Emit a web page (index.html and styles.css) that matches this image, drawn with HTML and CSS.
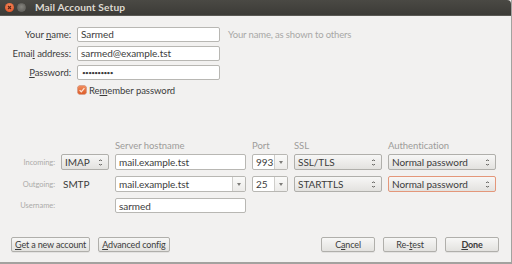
FILE: index.html
```html
<!DOCTYPE html>
<html>
<head>
<meta charset="utf-8">
<title>Mail Account Setup</title>
<link rel="stylesheet" href="styles.css">
</head>
<body>
<div class="window">
  <div class="titlebar">
    <span class="wbtn close"><svg width="9" height="9" viewBox="0 0 9 9"><path d="M3 3 L6 6 M6 3 L3 6" stroke="#5a2414" stroke-width="1.1"/></svg></span>
    <span class="wbtn min"></span>
    <span class="title">Mail Account Setup</span>
  </div>
  <div class="content">
    <div class="identity">
      <span class="lbl">Your <u>n</u>ame:</span>
      <div class="entry">Sarmed</div>
      <span class="hint">Your name, as shown to others</span>
      <span class="lbl">Emai<u>l</u> address:</span>
      <div class="entry">sarmed@example.tst</div>
      <span></span>
      <span class="lbl"><u>P</u>assword:</span>
      <div class="entry pw">••••••••••</div>
      <span></span>
    </div>
    <div class="remember">
      <span class="check"><svg width="8" height="8" viewBox="0 0 8 8"><path d="M1.6 4.1 L3.3 5.8 L6.4 2.2" fill="none" stroke="#fbe3d6" stroke-width="1.3"/></svg></span>
      <span>Re<u>m</u>ember password</span>
    </div>
    <div class="server">
      <span></span>
      <span></span>
      <span class="head">Server hostname</span>
      <span class="head">Port</span>
      <span class="head">SSL</span>
      <span class="head">Authentication</span>

      <span class="rlbl">Incoming:</span>
      <div class="btn sel">IMAP<span class="ud"></span></div>
      <div class="entry">mail.example.tst</div>
      <div class="combo"><span class="ctext">993</span><span class="carrow"></span></div>
      <div class="btn sel">SSL/TLS<span class="ud"></span></div>
      <div class="btn sel">Normal password<span class="ud"></span></div>

      <span class="rlbl">Outgoing:</span>
      <span class="plain">SMTP</span>
      <div class="combo"><span class="ctext">mail.example.tst</span><span class="carrow"></span></div>
      <div class="combo"><span class="ctext">25</span><span class="carrow"></span></div>
      <div class="btn sel">STARTTLS<span class="ud"></span></div>
      <div class="btn sel focus">Normal password<span class="ud"></span></div>

      <span class="rlbl">Username:</span>
      <span></span>
      <div class="entry">sarmed</div>
      <span></span>
      <span></span>
      <span></span>
    </div>
    <div class="actions">
      <div class="btn push"><u>G</u>et a new account</div>
      <div class="btn push"><u>A</u>dvanced config</div>
      <div class="spacer"></div>
      <div class="btn push fixed">C<u>a</u>ncel</div>
      <div class="btn push fixed">Re-<u>t</u>est</div>
      <div class="btn push fixed bold"><u>D</u>one</div>
    </div>
  </div>
</div>
</body>
</html>
```
FILE: styles.css
```css
html, body {
  margin: 0;
  padding: 0;
  background: #f2f1f0;
}
.window {
  width: 512px;
  height: 264px;
  box-sizing: border-box;
  display: flex;
  flex-direction: column;
  background: #f2f1f0;
  border-right: 1px solid #a3a29f;
  border-bottom: 2px solid #a3a29f;
  font-family: Lato, "Open Sans", sans-serif;
  font-size: 9.5px;
  letter-spacing: -0.05px;
  color: #3c3c3c;
  overflow: hidden;
}
u {
  text-decoration: underline;
  text-underline-offset: 1px;
}
.titlebar {
  height: 15px;
  flex: none;
  display: flex;
  align-items: center;
  background: linear-gradient(#4a4944, #3c3b37);
  border-bottom: 1px solid #5a5954;
  border-top-right-radius: 4px;
  padding-left: 5px;
}
.wbtn {
  width: 9px;
  height: 9px;
  border-radius: 50%;
  display: flex;
  margin-right: 3px;
  box-sizing: border-box;
}
.wbtn.close {
  background: radial-gradient(circle at 50% 35%, #f48a5d, #de4a1f);
}
.wbtn.min {
  background: radial-gradient(circle at 50% 40%, #86857f, #5e5d58);
  border: 1px solid #6d6c67;
}
.title {
  margin-left: 6px;
  font-weight: bold;
  font-size: 10.2px;
  letter-spacing: 0.1px;
  color: #dfdbd2;
  line-height: 15px;
}
.content {
  flex: 1;
  display: flex;
  flex-direction: column;
}
.identity {
  margin-top: 11px;
  display: grid;
  grid-template-columns: 71px 143px auto;
  grid-auto-rows: 15px;
  row-gap: 4px;
  column-gap: 6px;
  align-items: center;
}
.lbl {
  text-align: right;
  line-height: 15px;
}
.entry {
  box-sizing: border-box;
  height: 15px;
  background: #fff;
  border: 1px solid #b8b7b3;
  border-radius: 2px;
  padding-left: 3px;
  line-height: 13px;
  font-size: 10px;
  white-space: nowrap;
  overflow: hidden;
}
.entry.pw {
  font-size: 6.5px;
  letter-spacing: -0.7px;
  padding-left: 4px;
}
.hint {
  margin-left: 2px;
  color: #a8a8a6;
  letter-spacing: -0.15px;
}
.remember {
  margin-top: 4px;
  margin-left: 78px;
  height: 12px;
  display: flex;
  align-items: center;
  gap: 3px;
}
.check {
  width: 8px;
  height: 8px;
  border-radius: 1.5px;
  background: linear-gradient(#f08a5a, #dd5e2b);
  box-shadow: 0 0 0 0.5px #c2552a;
  display: flex;
}
.server {
  margin-top: 44px;
  display: grid;
  grid-template-columns: 55px 48px 131px 36px 88px 108px;
  column-gap: 6px;
  row-gap: 6px;
  grid-template-rows: 8px 16px 16px 15px;
  align-items: center;
}
.head {
  color: #9d9c9a;
  font-size: 9.5px;
  line-height: 12px;
  height: 12px;
  align-self: start;
}
.rlbl {
  text-align: right;
  font-size: 7.5px;
  color: #acaba9;
}
.plain {
  padding-left: 2px;
  font-size: 10px;
}
.server .entry {
  height: 16px;
  line-height: 14px;
}
.server > .entry:last-of-type {
  height: 15px;
}
.btn {
  box-sizing: border-box;
  border: 1px solid #b0afab;
  border-radius: 2px;
  background: linear-gradient(#f7f7f6, #e3e2df);
  white-space: nowrap;
  position: relative;
}
.btn.sel {
  height: 16px;
  line-height: 14px;
  padding-left: 3px;
  font-size: 10px;
}
.btn.focus {
  border-color: #e4977a;
}
.ud {
  position: absolute;
  right: 6px;
  top: 4px;
  width: 3px;
  height: 7px;
  background:
    linear-gradient(to bottom right, transparent 50%, #6e6d6a 50%) 0 0 / 1.5px 2px no-repeat,
    linear-gradient(to bottom left, transparent 50%, #6e6d6a 50%) 1.5px 0 / 1.5px 2px no-repeat,
    linear-gradient(to top right, transparent 50%, #6e6d6a 50%) 0 5px / 1.5px 2px no-repeat,
    linear-gradient(to top left, transparent 50%, #6e6d6a 50%) 1.5px 5px / 1.5px 2px no-repeat;
}
.combo {
  box-sizing: border-box;
  height: 16px;
  display: flex;
  border: 1px solid #b8b7b3;
  border-radius: 2px;
  background: #fff;
  overflow: hidden;
  font-size: 10px;
}
.ctext {
  flex: 1;
  padding-left: 3px;
  line-height: 14px;
  white-space: nowrap;
}
.carrow {
  width: 12px;
  flex: none;
  border-left: 1px solid #cfcecb;
  background: linear-gradient(#fafaf9, #ecebe9);
  position: relative;
}
.carrow::after {
  content: "";
  position: absolute;
  left: 4px;
  top: 6px;
  border-left: 2.5px solid transparent;
  border-right: 2.5px solid transparent;
  border-top: 3px solid #7d7c79;
}
.actions {
  margin-top: auto;
  display: flex;
  gap: 8px;
  padding: 0 12px 10px 11px;
}
.spacer {
  flex: 1;
}
.btn.push {
  height: 15px;
  line-height: 13px;
  font-size: 9px;
  letter-spacing: -0.15px;
  padding: 0 3px;
  text-align: center;
  box-shadow: 0 1px 0 rgba(0,0,0,0.06);
}
.btn.push.fixed {
  width: 54px;
}
.btn.push.bold {
  font-weight: bold;
}
```
